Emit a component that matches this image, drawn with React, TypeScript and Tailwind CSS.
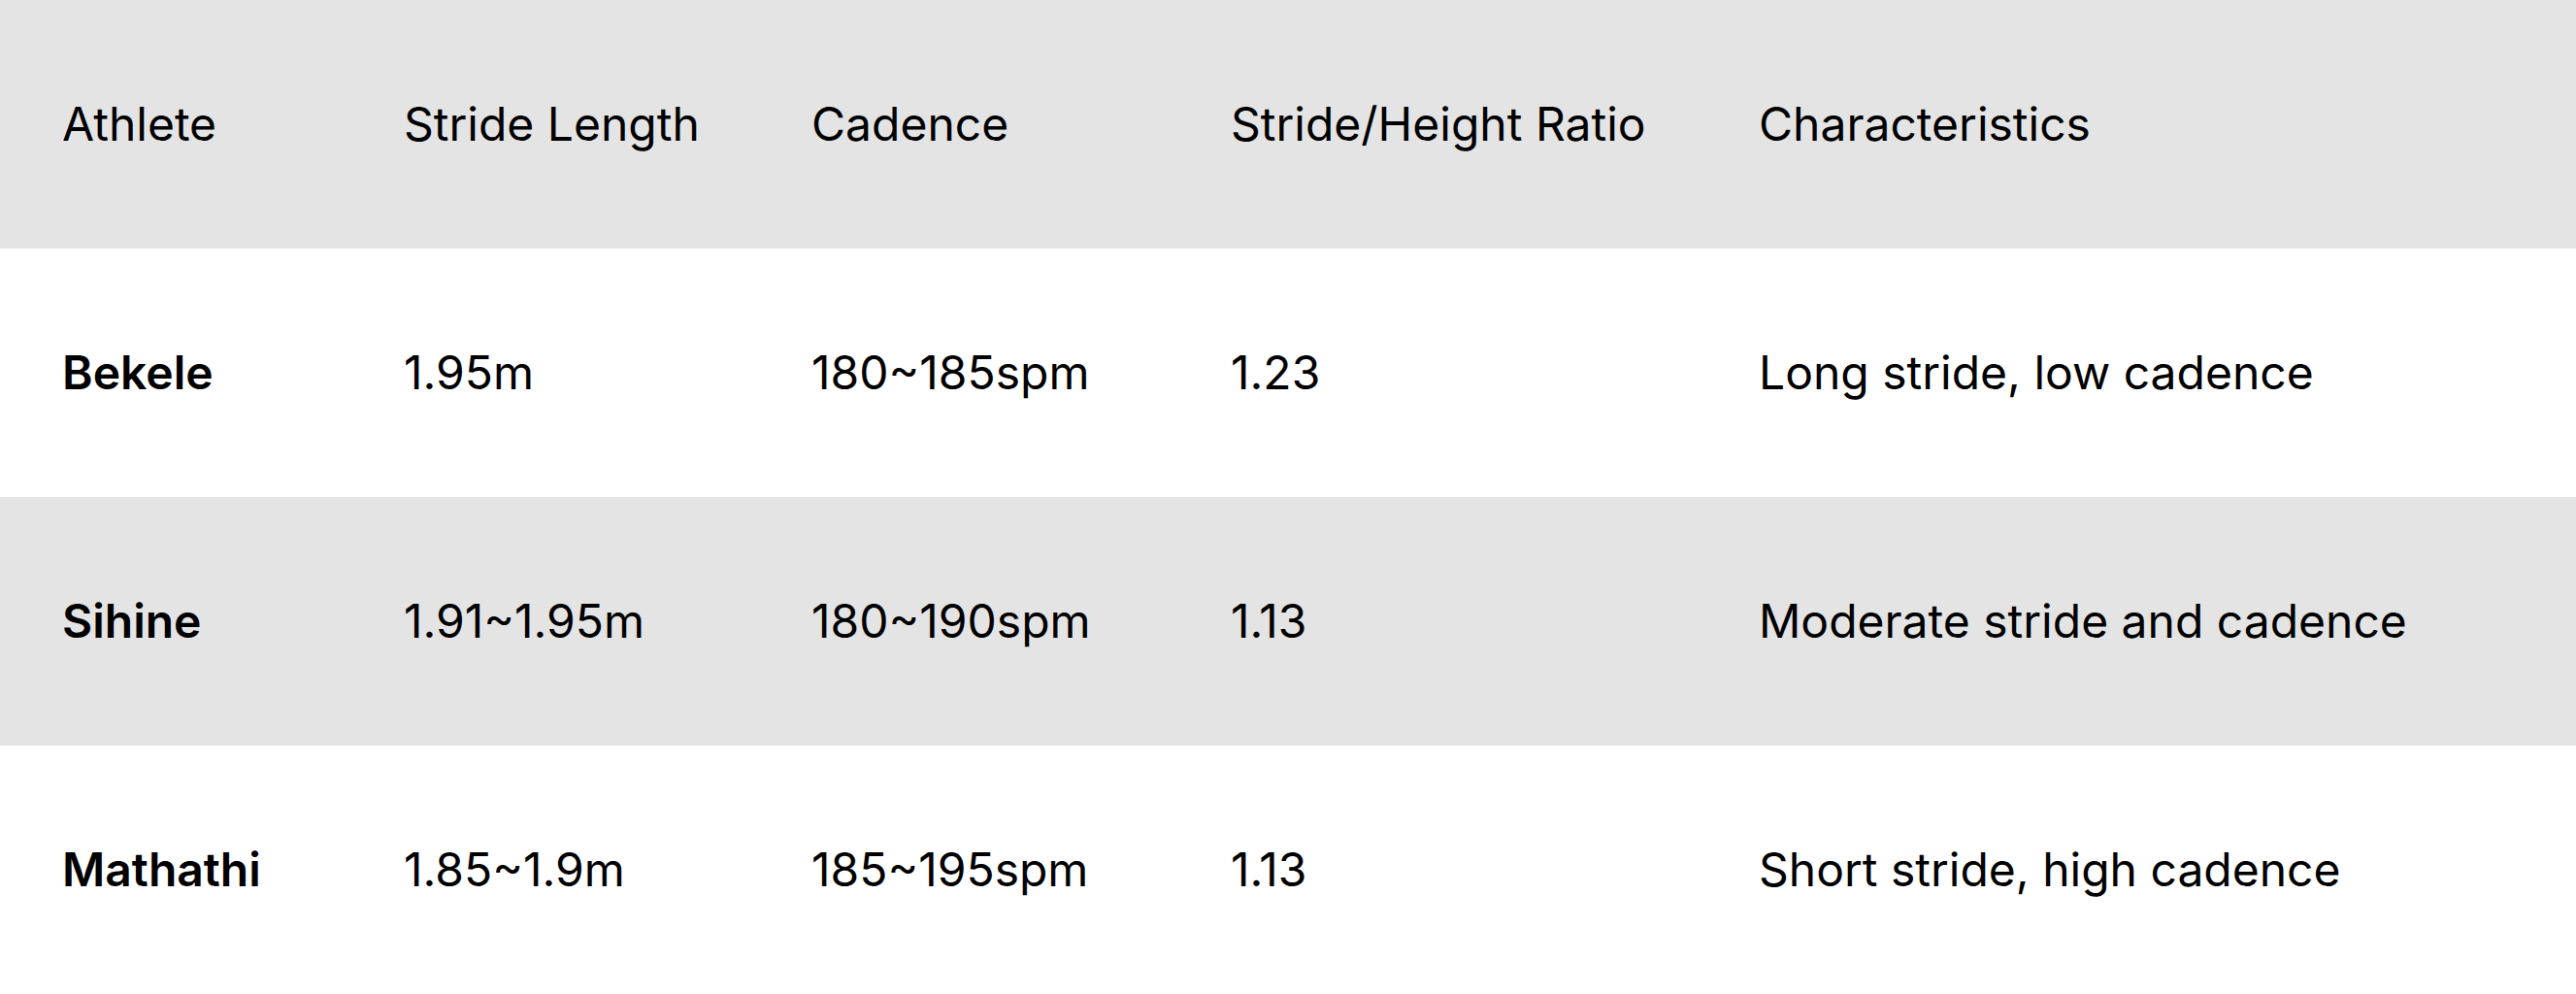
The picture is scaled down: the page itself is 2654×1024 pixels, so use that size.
import React from 'react';

const rows = [
  { athlete: 'Bekele', stride: '1.95m', cadence: '180~185spm', ratio: '1.23', notes: 'Long stride, low cadence' },
  { athlete: 'Sihine', stride: '1.91~1.95m', cadence: '180~190spm', ratio: '1.13', notes: 'Moderate stride and cadence' },
  { athlete: 'Mathathi', stride: '1.85~1.9m', cadence: '185~195spm', ratio: '1.13', notes: 'Short stride, high cadence' },
];

const grid = 'grid grid-cols-[352px_420px_432px_544px_1fr] h-[256px] items-center';
const cell = 'pl-16 whitespace-nowrap';

export default function App() {
  return (
    <div className="w-full h-[1024px] bg-white text-black font-['Inter',sans-serif] text-[48px] leading-none">
      <div className={`${grid} bg-[#e4e4e4]`}>
        <div className={cell}>Athlete</div>
        <div className={cell}>Stride Length</div>
        <div className={cell}>Cadence</div>
        <div className={cell}>Stride/Height Ratio</div>
        <div className={cell}>Characteristics</div>
      </div>
      {rows.map((r, i) => (
        <div key={r.athlete} className={`${grid} ${i % 2 === 1 ? 'bg-[#e4e4e4]' : 'bg-white'}`}>
          <div className={`${cell} font-semibold`}>{r.athlete}</div>
          <div className={cell}>{r.stride}</div>
          <div className={cell}>{r.cadence}</div>
          <div className={cell}>{r.ratio}</div>
          <div className={cell}>{r.notes}</div>
        </div>
      ))}
    </div>
  );
}
